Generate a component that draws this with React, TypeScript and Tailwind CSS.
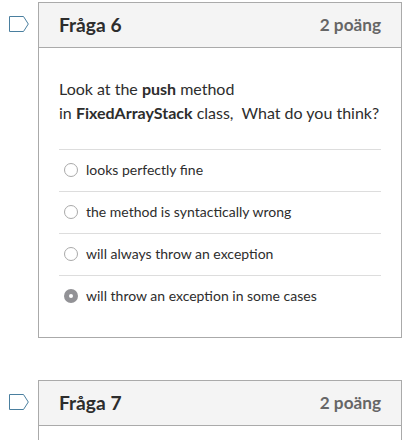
import React from "react";

function Flag() {
  return (
    <svg className="mt-[13px] ml-[9px] h-[18px] w-[20px] shrink-0" viewBox="0 0 20 18" fill="none">
      <path d="M0.5 1.5H14.5L19.3 9L14.5 16.5H0.5Z" stroke="#4a7f9f" />
    </svg>
  );
}

function Radio({ checked }: { checked?: boolean }) {
  return checked ? (
    <span className="flex size-[14px] items-center justify-center rounded-full bg-[#929296]">
      <span className="size-1 rounded-full bg-white" />
    </span>
  ) : (
    <span className="size-[14px] rounded-full border border-[#a9a9a9] bg-white" />
  );
}

function Header({ title }: { title: string }) {
  return (
    <header className="flex h-[45px] items-center justify-between border-b border-[#aaaaaa] bg-[#f4f4f4] px-5 font-bold">
      <h2 className="text-[19.2px] leading-6 text-[#2d2d2d]">{title}</h2>
      <span className="text-[17.2px] leading-6 text-[#666666]">2 poäng</span>
    </header>
  );
}

const answers = [
  "looks perfectly fine",
  "the method is syntactically wrong",
  "will always throw an exception",
  "will throw an exception in some cases",
];

export default function App() {
  return (
    <main className="h-[440px] w-[415px] overflow-hidden bg-white pt-[2px] font-[Lato,sans-serif] text-[#2d2d2d]">
      <section className="flex">
        <Flag />
        <article className="ml-[9px] h-[336px] w-[364px] border border-[#aaaaaa]">
          <Header title="Fråga 6" />
          <div className="px-5 pt-[29px]">
            <p className="text-[16px] leading-6 whitespace-nowrap">
              Look at the <b>push</b> method
              <br />
              in <b>FixedArrayStack</b> class,&nbsp; What do you think?
            </p>
            <ul className="mt-6">
              {answers.map((a, i) => (
                <li key={a} className="flex h-[42px] items-center gap-2 border-t border-[#dddddd] pb-px pl-[5px] text-[14px]">
                  <Radio checked={i === 3} />
                  <span className="leading-5">{a}</span>
                </li>
              ))}
            </ul>
          </div>
        </article>
      </section>
      <section className="mt-[42px] flex">
        <Flag />
        <article className="ml-[9px] h-[100px] w-[364px] border border-[#aaaaaa]">
          <Header title="Fråga 7" />
        </article>
      </section>
    </main>
  );
}
